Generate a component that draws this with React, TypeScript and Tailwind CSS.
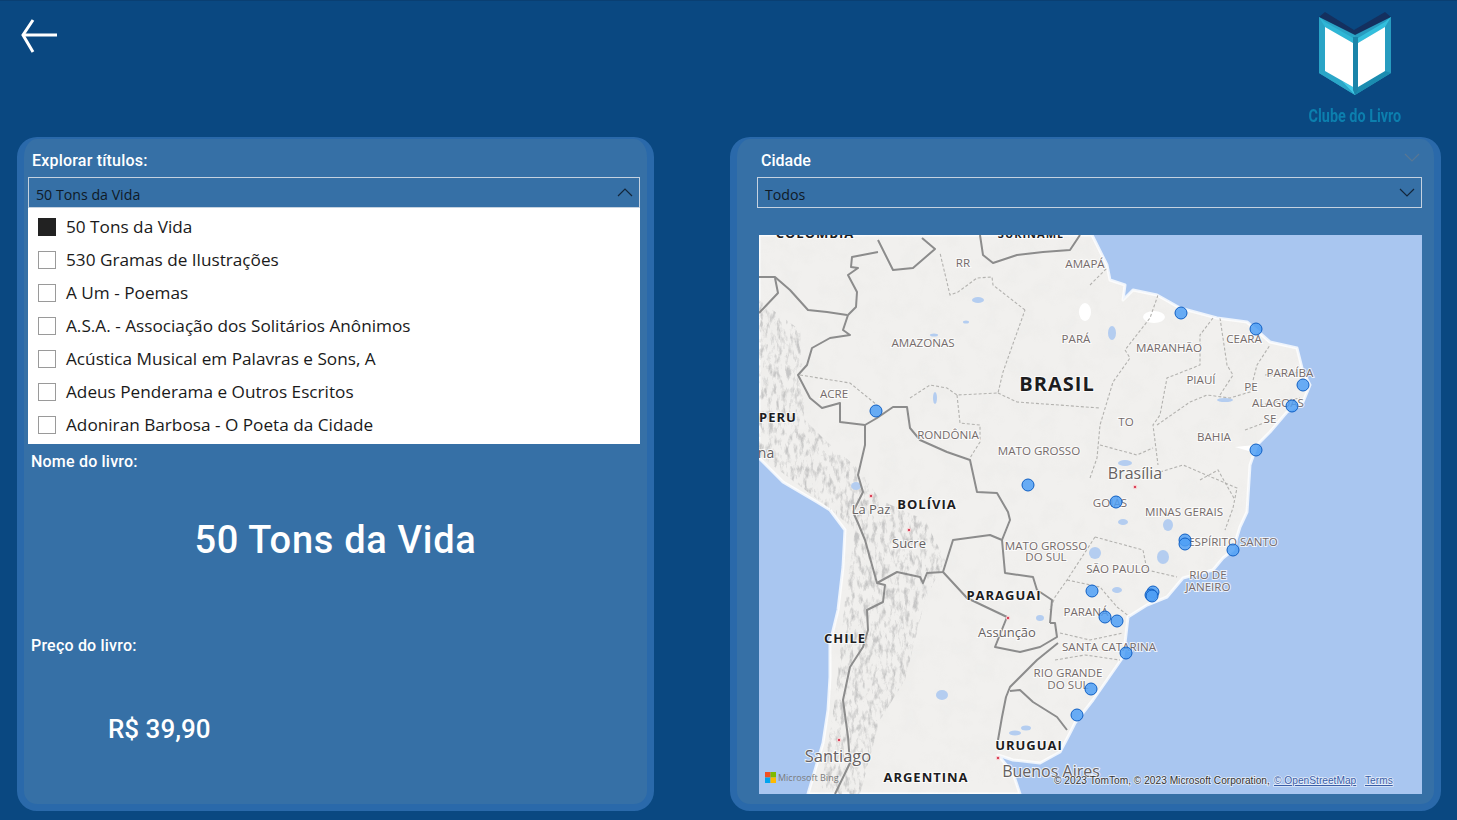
const titles = [
  '50 Tons da Vida',
  '530 Gramas de Ilustrações',
  'A Um - Poemas',
  'A.S.A. - Associação dos Solitários Anônimos',
  'Acústica Musical em Palavras e Sons, A',
  'Adeus Penderama e Outros Escritos',
  'Adoniran Barbosa - O Poeta da Cidade',
];

const LAND =
  'M759 235 L759 458 L783 482 L817 502 L830 510 L845 530 L843 567 L838 610 L830 643 L830 677 L828 710 L823 743 L808 794 L1020 794 L1013 773 L998 755 L1013 760 L1040 763 L1060 752 L1070 733 L1075 723 L1093 700 L1107 680 L1123 657 L1125 643 L1128 617 L1147 605 L1167 597 L1183 578 L1213 570 L1223 558 L1233 550 L1240 527 L1247 512 L1250 465 L1257 445 L1270 432 L1287 412 L1303 402 L1310 385 L1303 372 L1297 348 L1270 342 L1247 322 L1217 318 L1180 308 L1157 295 L1133 290 L1123 300 L1125 285 L1110 280 L1107 265 L1092 235 Z';

const ANDES =
  'M759 300 L800 330 L805 420 L825 440 L860 470 L880 500 L925 520 L945 560 L925 600 L905 680 L880 720 L860 794 L820 794 L835 700 L845 600 L855 530 L825 505 L759 455 Z';

const COUNTRY_BORDERS = [
  'M878 240 L893 270 L913 268 L935 249 L922 238',
  'M878 252 L852 257 L851 267 L858 268 L848 275 L857 292 L856 307 L848 315 L843 330 L850 335 L830 338 L812 348 L807 365 L798 375 L810 398 L822 408 L840 403 L840 422 L865 425 L877 418 L893 407 L907 407 L910 428 L920 440 L947 452 L970 460 L977 492 L997 493 L1008 512 L1010 520 L1002 540 L1005 573 L1033 577 L1037 590 L1052 600 L1050 623',
  'M759 277 L775 277 L790 290 L808 310 L827 312 L847 315',
  'M759 313 L778 293 L775 278',
  'M865 425 L865 445 L858 475 L863 492 L853 512 L858 523 L865 540 L877 583 L885 585 L883 602 L867 610 L868 630 L863 647 L850 667 L843 700 L848 737 L850 763 L835 794',
  'M877 583 L897 572 L920 577 L923 583 L927 573 L943 572 L953 540 L990 535 L1002 540',
  'M943 572 L967 598 L1007 617 L995 647 L1020 652 L1040 647 L1057 637 L1055 623 L1050 623',
  'M1058 643 L1037 660 L1010 687 L1006 697 L1002 717 L998 740',
  'M1010 691 L1020 690 L1033 702 L1057 717 L1067 730',
  'M980 235 L983 255 L993 263 L1017 255 L1043 252 L1070 250 L1080 235',
];

const STATE_BORDERS = [
  'M800 375 L850 383 L877 405',
  'M910 398 L930 385 L947 388 L957 395 L998 393 L1003 372 L1025 310',
  'M1025 310 L993 285 L992 277 L977 278 L958 292 L950 295 L940 253',
  'M998 393 L1017 402 L1100 408',
  'M957 395 L960 423 L980 425 L980 442 L970 458',
  'M1090 285 L1107 268',
  'M1158 295 L1150 318 L1125 350 L1130 358 L1113 382 L1100 425 L1097 458 L1090 478',
  'M1213 318 L1200 335 L1200 365 L1167 378 L1160 415 L1153 425 L1158 465',
  'M1220 318 L1227 365 L1233 375 L1220 395',
  'M1157 425 L1190 402 L1207 395 L1230 398 L1250 392 L1257 365 L1270 345',
  'M1100 445 L1137 455 L1153 448',
  'M1160 472 L1183 465 L1237 488 L1233 508 L1225 530',
  'M1095 537 L1067 580 L1055 597 L1050 610',
  'M1095 537 L1143 550 L1147 570 L1177 577',
  'M1067 580 L1100 587 L1117 607 L1130 617',
  'M1060 633 L1090 640 L1123 633',
  'M1055 660 L1085 655 L1120 660',
  'M1260 405 L1300 398 M1265 375 L1305 372 M1245 430 L1272 420',
  'M1200 480 L1218 470 L1235 500',
];

const WATER = [
  [978, 300, 6, 3],
  [966, 322, 3, 1.5],
  [934, 335, 4, 1.5],
  [935, 398, 2, 6],
  [1112, 333, 4, 7],
  [1125, 463, 7, 3],
  [1168, 525, 5, 6],
  [1163, 557, 6, 7],
  [1095, 553, 6, 6],
  [942, 695, 6, 5],
  [1015, 733, 6, 2.5],
  [1026, 728, 5, 2.5],
  [1123, 522, 5, 3],
  [1117, 590, 5, 3],
  [856, 486, 5, 4],
  [1040, 618, 4, 3],
  [1225, 400, 8, 2],
];

const STATE_LABELS: [string, number, number][] = [
  ['RR', 963, 267],
  ['AMAPÁ', 1085, 268],
  ['AMAZONAS', 923, 347],
  ['PARÁ', 1076, 343],
  ['MARANHÃO', 1169, 352],
  ['CEARÁ', 1244, 343],
  ['PARAÍBA', 1290, 377],
  ['PIAUÍ', 1201, 384],
  ['PE', 1251, 391],
  ['ALAGOAS', 1278, 407],
  ['SE', 1270, 423],
  ['TO', 1126, 426],
  ['BAHIA', 1214, 441],
  ['ACRE', 834, 398],
  ['RONDÔNIA', 948, 439],
  ['MATO GROSSO', 1039, 455],
  ['GOIÁS', 1110, 507],
  ['MINAS GERAIS', 1184, 516],
  ['MATO GROSSO', 1046, 550],
  ['DO SUL', 1046, 561],
  ['ESPÍRITO SANTO', 1233, 546],
  ['SÃO PAULO', 1118, 573],
  ['RIO DE', 1208, 579],
  ['JANEIRO', 1208, 591],
  ['PARANÁ', 1086, 616],
  ['SANTA CATARINA', 1109, 651],
  ['RIO GRANDE', 1068, 677],
  ['DO SUL', 1068, 689],
];

const COUNTRY_LABELS: [string, number, number, number][] = [
  ['BRASIL', 1057, 391, 20],
  ['BOLÍVIA', 927, 509, 13],
  ['PERU', 778, 422, 13],
  ['PARAGUAI', 1004, 600, 13],
  ['CHILE', 845, 643, 13],
  ['URUGUAI', 1029, 750, 13],
  ['ARGENTINA', 926, 782, 13],
  ['COLOMBIA', 815, 238, 13],
  ['SURINAME', 1031, 238, 11],
];

const CITY_LABELS: [string, number, number, number][] = [
  ['Brasília', 1135, 479, 16],
  ['La Paz', 871, 514, 13],
  ['Sucre', 909, 548, 13],
  ['Assunção', 1007, 637, 13],
  ['Santiago', 838, 762, 16.5],
  ['Buenos Aires', 1051, 777, 16],
  ['na', 766, 458, 14],
];

const PINS = [
  [876, 411],
  [1028, 485],
  [1181, 313],
  [1256, 329],
  [1303, 385],
  [1292, 406],
  [1256, 450],
  [1116, 502],
  [1185, 540],
  [1185, 544],
  [1233, 550],
  [1092, 591],
  [1153, 592],
  [1151, 595],
  [1152, 596],
  [1105, 617],
  [1117, 621],
  [1126, 653],
  [1091, 689],
  [1077, 715],
];

const CITY_DOTS = [
  [871, 496],
  [909, 530],
  [1135, 487],
  [1008, 618],
  [839, 740],
  [998, 758],
];

function Chevron({ up = false, color = '#14263a' }: { up?: boolean; color?: string }) {
  return (
    <svg width="16" height="9" viewBox="0 0 16 9" fill="none" stroke={color} strokeWidth="1.2">
      <polyline points={up ? '1,8 8,1 15,8' : '1,1 8,8 15,1'} />
    </svg>
  );
}

function Logo() {
  return (
    <svg width="80" height="90" viewBox="1315 10 80 90">
      <polygon points="1325,12 1354,30 1385,12 1391,17 1355,36 1319,17" fill="#14305f" />
      <polygon points="1319,17 1355,35 1355,95 1319,73" fill="#2aa4c6" />
      <polygon points="1391,17 1355,35 1355,95 1391,73" fill="#279cc0" />
      <polygon points="1319,17 1325,22 1353,38 1353,43 1325,27" fill="#2fb6d6" />
      <polygon points="1391,17 1385,22 1358,38 1358,43 1385,27" fill="#33bfdd" />
      <polygon points="1319,73 1325,71 1353,87 1355,95" fill="#2aa6c8" />
      <polygon points="1342,81 1353,87 1355,95" fill="#42cbe8" />
      <polygon points="1391,73 1385,71 1358,87 1355,95" fill="#1b8cb0" />
      <polygon points="1325,27 1353,43 1353,87 1325,71" fill="#ffffff" />
      <polygon points="1358,43 1385,27 1385,71 1358,87" fill="#ffffff" />
      <polygon points="1353,37 1358,37 1358,90 1355,95 1353,90" fill="#1a84a9" />
    </svg>
  );
}

function MapChart() {
  return (
    <svg viewBox="759 235 663 559" className="w-[663px] h-[559px] block">
      <defs>
        <clipPath id="land">
          <path d={LAND} />
        </clipPath>
        <clipPath id="andes">
          <path d={ANDES} />
        </clipPath>
        <filter id="rock" x="0" y="0" width="100%" height="100%">
          <feTurbulence type="fractalNoise" baseFrequency="0.22 0.09" numOctaves="4" seed="7" />
          <feColorMatrix values="0 0 0 0 0.5  0 0 0 0 0.5  0 0 0 0 0.5  3.4 0 0 0 -1.6" />
          <feGaussianBlur stdDeviation="0.4" />
        </filter>
        <filter id="mottle" x="0" y="0" width="100%" height="100%">
          <feTurbulence type="fractalNoise" baseFrequency="0.05" numOctaves="3" seed="3" />
          <feColorMatrix values="0 0 0 0 0.72  0 0 0 0 0.72  0 0 0 0 0.7  1 0 0 0 -0.42" />
        </filter>
        <filter id="soft">
          <feGaussianBlur stdDeviation="0.45" />
        </filter>
      </defs>

      <rect x="759" y="235" width="663" height="559" fill="#a9c6f0" />
      <g filter="url(#soft)">
        <path d={LAND} fill="#f1f0ee" stroke="#ffffff" strokeWidth="3" strokeOpacity="0.8" strokeLinejoin="round" />

        <g clipPath="url(#land)">
          <rect x="759" y="235" width="560" height="559" filter="url(#mottle)" opacity="0.2" />
          <g clipPath="url(#andes)">
            <rect x="759" y="235" width="240" height="559" filter="url(#rock)" opacity="0.8" />
          </g>
          <ellipse cx="1085" cy="312" rx="6" ry="9" fill="#ffffff" />
          <ellipse cx="1154" cy="317" rx="11" ry="6" fill="#ffffff" />
          <path d="M1235 447 L1255 445 L1252 452 Z" fill="#ffffff" />
          {WATER.map(([cx, cy, rx, ry]) => (
            <ellipse key={`${cx}-${cy}`} cx={cx} cy={cy} rx={rx} ry={ry} fill="#b4cdf0" />
          ))}
          {STATE_BORDERS.map((d) => (
            <path key={d} d={d} fill="none" stroke="#b3b2af" strokeWidth="1.1" strokeDasharray="3 2" />
          ))}
          {COUNTRY_BORDERS.map((d) => (
            <path key={d} d={d} fill="none" stroke="#8c8c8c" strokeWidth="2" strokeLinejoin="round" />
          ))}
        </g>
      </g>

      {CITY_DOTS.map(([cx, cy]) => (
        <circle key={`${cx}-${cy}`} cx={cx} cy={cy} r="1.8" fill="#d9435a" stroke="#fbd9d9" strokeWidth="1" />
      ))}

      <g className="font-['Open_Sans',sans-serif] [paint-order:stroke]" stroke="#ffffff" strokeOpacity="0.75" strokeWidth="2" textAnchor="middle">
        {STATE_LABELS.map(([text, x, y]) => (
          <text key={`${text}-${x}`} x={x} y={y} fontSize="11.6" fontWeight="500" fill="#756b6b">
            {text}
          </text>
        ))}
        {COUNTRY_LABELS.map(([text, x, y, size]) => (
          <text key={text} x={x} y={y} fontSize={size} fontWeight="700" letterSpacing="1" fill="#1d1d1f">
            {text}
          </text>
        ))}
        {CITY_LABELS.map(([text, x, y, size]) => (
          <text key={text} x={x} y={y} fontSize={size} fill="#666161">
            {text}
          </text>
        ))}
      </g>

      {PINS.map(([cx, cy]) => (
        <circle key={`${cx}-${cy}`} cx={cx} cy={cy} r="6" fill="#4f9ff5" fillOpacity="0.85" stroke="#0f5fc4" strokeWidth="1" />
      ))}

      <rect x="765" y="772" width="5.5" height="5.5" fill="#f25022" />
      <rect x="770.5" y="772" width="5.5" height="5.5" fill="#7fba00" />
      <rect x="765" y="777.5" width="5.5" height="5.5" fill="#00a4ef" />
      <rect x="770.5" y="777.5" width="5.5" height="5.5" fill="#ffb900" />
      <text x="778" y="781" fontSize="9" fill="#7a7a7a" className="font-['Open_Sans',sans-serif]">
        Microsoft Bing
      </text>

      <g className="font-['Liberation_Sans',sans-serif] [paint-order:stroke]" fontSize="10.2" stroke="#ffffff" strokeOpacity="0.7" strokeWidth="1.5">
        <text x="1054" y="784" fill="#333333">
          © 2023 TomTom, © 2023 Microsoft Corporation,
        </text>
        <text x="1274" y="784" fill="#3a5ea8" textDecoration="underline">
          © OpenStreetMap
        </text>
        <text x="1365" y="784" fill="#3a5ea8" textDecoration="underline">
          Terms
        </text>
      </g>
    </svg>
  );
}

export default function App() {
  return (
    <div className="w-[1457px] h-[820px] overflow-hidden bg-[#0a4881] border-t border-[#0a3f72] flex flex-col font-['Roboto',sans-serif]">
      {/* Header */}
      <div className="h-[136px] shrink-0 flex items-start">
        <svg width="37" height="36" viewBox="0 0 37 36" fill="none" stroke="#ffffff" strokeWidth="3" className="ml-[21px] mt-[17px]">
          <path d="M36 17 H3" />
          <path d="M12 2 L2 17 L12 34" />
        </svg>
        <div className="ml-auto mr-[52px] w-[100px] flex flex-col items-center pt-[9px]">
          <Logo />
          <div className="mt-[6px] text-[18px] leading-[20px] font-bold text-[#0c7fae] scale-x-[0.8] whitespace-nowrap">
            Clube do Livro
          </div>
        </div>
      </div>

      {/* Panels */}
      <div className="flex pl-[17px] gap-[76px]">
        <div className="w-[637px] h-[674px] shrink-0 bg-[#3670a6] border-[7px] border-t-[2px] border-[#2a69aa] rounded-[20px] flex flex-col">
          <div className="pt-[11px] pl-[8px] text-[16px] leading-[21px] font-medium tracking-[0.2px] text-white">Explorar títulos:</div>
          <div className="mt-[6px] ml-[4px] mr-[7px] h-[31px] border border-[#c5d2e0] flex items-center justify-between pl-[7px] pr-[6px]">
            <span className="font-['Open_Sans',sans-serif] text-[14.2px] text-[#0f1a26] mt-[5px]">50 Tons da Vida</span>
            <Chevron up />
          </div>
          <div className="ml-[4px] mr-[7px] bg-white pt-[2px] h-[236px] font-['Open_Sans',sans-serif]">
            {titles.map((title, i) => (
              <div key={title} className="h-[33px] flex items-center pl-[10px] gap-[10px]">
                <span className={i === 0 ? 'w-[18px] h-[18px] bg-[#222222]' : 'w-[18px] h-[18px] border border-[#9a9a9a] bg-white'} />
                <span className="text-[17.2px] text-[#1a1a1a] whitespace-nowrap">{title}</span>
              </div>
            ))}
          </div>
          <div className="mt-[8px] pl-[7px] text-[16px] leading-[20px] font-medium tracking-[0.2px] text-white">Nome do livro:</div>
          <div className="mt-[43px] text-center text-[38px] leading-[50px] font-medium text-white tracking-[0.7px]">50 Tons da Vida</div>
          <div className="mt-[71px] pl-[7px] text-[16px] leading-[20px] font-medium tracking-[0.2px] text-white">Preço do livro:</div>
          <div className="mt-[55px] pl-[84px] text-[26px] leading-[36px] font-medium text-white">R$ 39,90</div>
        </div>

        <div className="w-[711px] h-[674px] shrink-0 bg-[#3670a6] border-[7px] border-t-[2px] border-[#2a69aa] rounded-[20px] flex flex-col">
          <div className="pt-[11px] pl-[24px] pr-[14px] flex items-center justify-between">
            <span className="text-[16px] leading-[21px] font-medium text-white">Cidade</span>
            <span className="-mt-[6px]">
              <Chevron color="#587794" />
            </span>
          </div>
          <div className="mt-[6px] ml-[20px] mr-[12px] h-[31px] border border-[#c5d2e0] flex items-center justify-between pl-[7px] pr-[6px]">
            <span className="font-['Open_Sans',sans-serif] text-[14.2px] text-[#0f1a26] mt-[5px]">Todos</span>
            <Chevron />
          </div>
          <div className="mt-[27px] ml-[22px] mr-[12px]">
            <MapChart />
          </div>
        </div>
      </div>
    </div>
  );
}
